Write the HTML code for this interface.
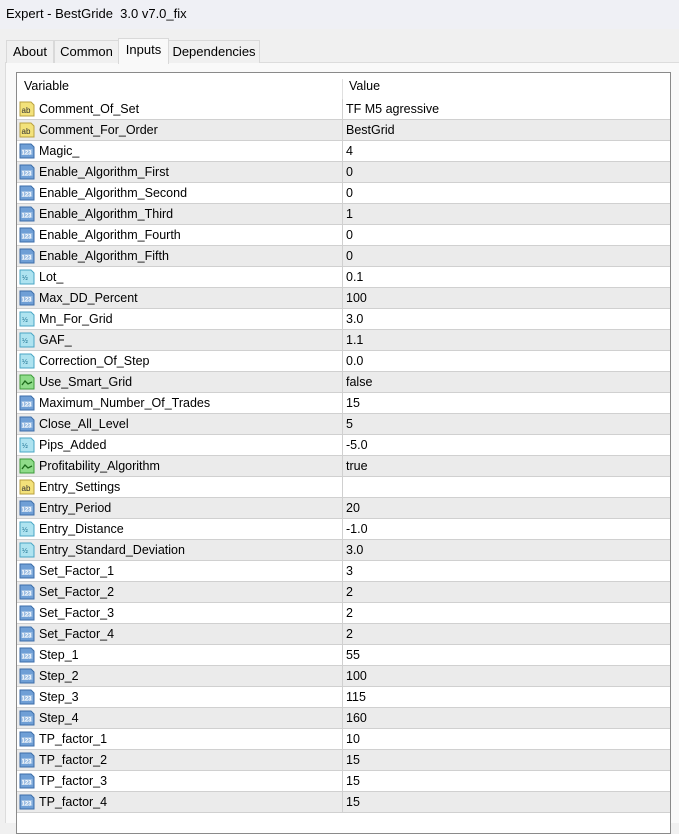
<!DOCTYPE html>
<html><head><meta charset="utf-8"><style>
body{margin:0;width:679px;height:822px;background:#f0f0f0;font-family:"Liberation Sans",sans-serif;font-size:12px;color:#000;position:relative;overflow:hidden}
.title{position:absolute;left:0;top:0;width:679px;height:29px;background:#eff0f5}
.title span{position:absolute;left:6px;top:6px;font-size:13px}
.tab{position:absolute;top:40px;height:22px;border:1px solid #d9d9d9;border-bottom:none;background:#f0f0f0;font-size:13px;line-height:22px;text-align:center}
.tab.act{top:38px;height:25px;background:#f9f9f9;z-index:2}
.panel{position:absolute;left:5px;top:62px;width:673px;height:760px;background:#f9f9f9;border-top:1px solid #dcdcdc;border-left:1px solid #dcdcdc}
.list{position:absolute;left:16px;top:72px;width:653px;height:760px;background:#fff;border:1px solid #8a8a8a}
.hdr{position:absolute;left:0;top:0;width:653px;height:26px}
.hdr div{position:absolute;top:6px;font-size:12.5px}
.row{position:absolute;left:0;width:653px;height:20px;border-bottom:1px solid #d0d0d0}
.row.g{background:#ebebeb}
.row .n{position:absolute;left:22px;top:3px;font-size:12.5px}
.row .v{position:absolute;left:329px;top:3px;font-size:12.5px}
.row .sep{position:absolute;left:325px;top:0;width:1px;height:21px;background:#d0d0d0}
.ic{position:absolute;left:2px;top:2px;width:16px;height:16px}
.vsep{position:absolute;left:325px;top:0;width:1px;height:26px;background:#e0e0e0}
</style></head><body>
<div class="title"><span>Expert - BestGride&nbsp; 3.0 v7.0_fix</span></div>
<div class="panel"></div>
<div class="tab" style="left:6px;width:46px">About</div>
<div class="tab" style="left:54px;width:63px">Common</div>
<div class="tab act" style="left:118px;width:49px">Inputs</div>
<div class="tab" style="left:168px;width:90px">Dependencies</div>
<div class="list">
<div class="hdr"><div style="left:7px">Variable</div><div style="left:332px">Value</div><div class="vsep"></div></div>
<div id="rows"></div>
</div>
<script>
var d=[["a","Comment_Of_Set","TF M5 agressive"],["a","Comment_For_Order","BestGrid"],["i","Magic_","4"],["i","Enable_Algorithm_First","0"],["i","Enable_Algorithm_Second","0"],["i","Enable_Algorithm_Third","1"],["i","Enable_Algorithm_Fourth","0"],["i","Enable_Algorithm_Fifth","0"],["d","Lot_","0.1"],["i","Max_DD_Percent","100"],["d","Mn_For_Grid","3.0"],["d","GAF_","1.1"],["d","Correction_Of_Step","0.0"],["b","Use_Smart_Grid","false"],["i","Maximum_Number_Of_Trades","15"],["i","Close_All_Level","5"],["d","Pips_Added","-5.0"],["b","Profitability_Algorithm","true"],["a","Entry_Settings",""],["i","Entry_Period","20"],["d","Entry_Distance","-1.0"],["d","Entry_Standard_Deviation","3.0"],["i","Set_Factor_1","3"],["i","Set_Factor_2","2"],["i","Set_Factor_3","2"],["i","Set_Factor_4","2"],["i","Step_1","55"],["i","Step_2","100"],["i","Step_3","115"],["i","Step_4","160"],["i","TP_factor_1","10"],["i","TP_factor_2","15"],["i","TP_factor_3","15"],["i","TP_factor_4","15"]];
var ic={
a:'<svg class="ic" viewBox="0 0 16 16"><path d="M1 1h11l3 3v11H1z" fill="#f3e27a" stroke="#b8a040"/><text x="2.5" y="12" font-size="8" font-family="Liberation Sans" fill="#333">ab</text></svg>',
i:'<svg class="ic" viewBox="0 0 16 16"><path d="M1 1h11l3 3v11H1z" fill="#6f9fd6" stroke="#3d6ea8"/><rect x="2.5" y="6" width="11" height="6" fill="#fff" opacity=".3"/><text x="2.5" y="11.5" font-size="6" font-family="Liberation Sans" font-weight="bold" fill="#fff">123</text></svg>',
d:'<svg class="ic" viewBox="0 0 16 16"><path d="M1 1h11l3 3v11H1z" fill="#aee3f0" stroke="#4aa6c4"/><text x="3" y="11" font-size="7" font-family="Liberation Sans" fill="#1a6f8f">½</text></svg>',
b:'<svg class="ic" viewBox="0 0 16 16"><path d="M1 1h11l3 3v11H1z" fill="#8fdc8a" stroke="#3c9a3a"/><path d="M3 11l3-4 3 3 4-2" fill="none" stroke="#1d6b1b" stroke-width="1.3"/></svg>'};
var h='';d.forEach(function(r,k){h+='<div class="row'+(k%2?' g':'')+'" style="top:'+(26+k*21)+'px">'+ic[r[0]]+'<div class="n">'+r[1]+'</div><div class="sep"></div><div class="v">'+r[2]+'</div></div>'});
document.getElementById('rows').innerHTML=h;
</script>
</body></html>
